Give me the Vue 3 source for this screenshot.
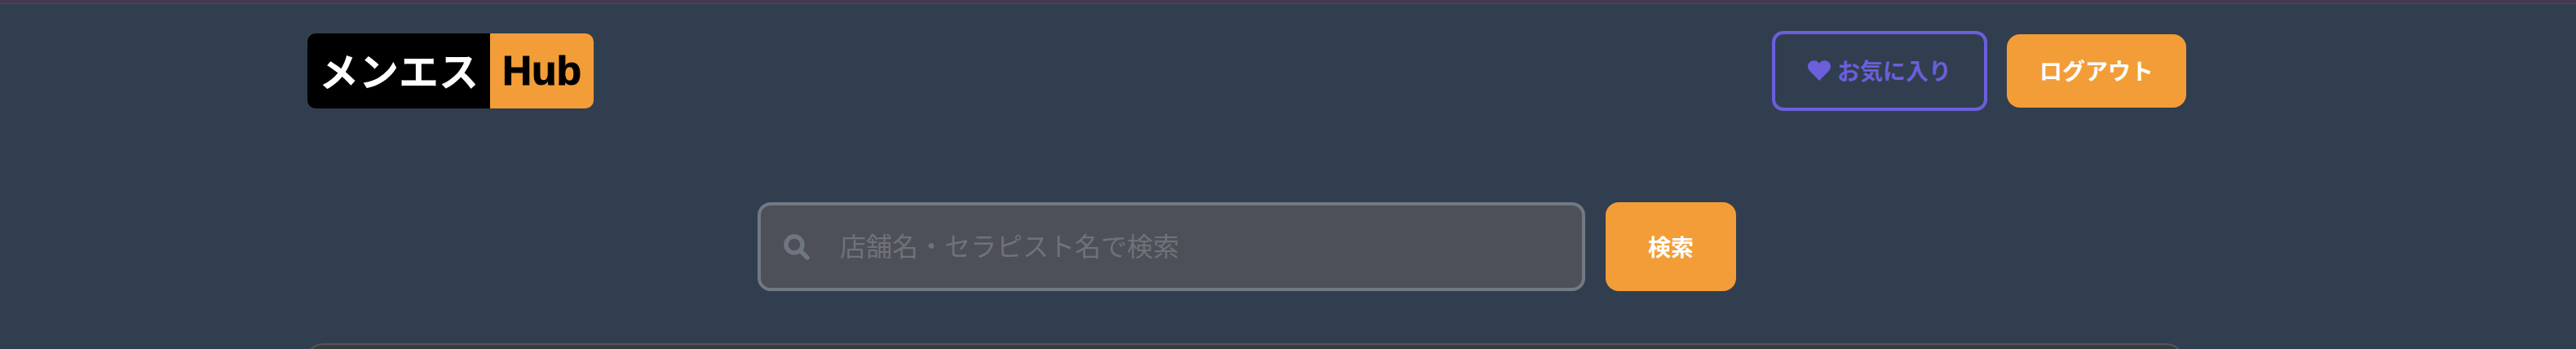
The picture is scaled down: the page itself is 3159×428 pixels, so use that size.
<script setup>
const placeholder = '店舗名・セラピスト名で検索'
</script>

<template>
  <div class="page">
    <div class="topline"></div>
    <header class="header">
      <div class="logo">
        <span class="logo-left">メンエス</span>
        <span class="logo-right">Hub</span>
      </div>
      <div class="actions">
        <button class="fav">
          <svg class="heart" viewBox="0 0 28 25" aria-hidden="true">
            <path d="M14 25 2.800 13.600C-.9 9.800-.9 5 2.300 2.200 5.400-.6 10.200-.4 13 2.600l1 1.100 1-1.100c2.800-3 7.600-3.200 10.700-.4 3.200 2.800 3.200 7.600-.5 11.400Z" />
          </svg>
          お気に入り
        </button>
        <button class="orange logout">ログアウト</button>
      </div>
    </header>
    <form class="search" @submit.prevent>
      <div class="field">
        <svg class="glass" viewBox="0 0 32 32" aria-hidden="true">
          <circle cx="13" cy="13" r="10" />
          <path d="M20.500 20.500l8.500 8.500" />
        </svg>
        <input class="input" type="text" :placeholder="placeholder" />
      </div>
      <button class="orange submit">検索</button>
    </form>
    <section class="card"></section>
  </div>
</template>

<style>
html, body { margin: 0; background: #313e4f; overflow: hidden; }
</style>

<style scoped>
.page {
  width: 3159px;
  height: 428px;
  overflow: hidden;
  font-family: "Noto Sans CJK JP", "Liberation Sans", sans-serif;
}
.topline {
  height: 4px;
  background: #47374f;
  border-bottom: 1px solid #4c4a58;
}
.header {
  display: flex;
  align-items: center;
  justify-content: space-between;
  margin: 33px 478px 0 377px;
  height: 98px;
}
.logo {
  display: flex;
  height: 92px;
  border-radius: 10px;
  overflow: hidden;
  font-weight: 700;
}
.logo-left {
  width: 224px;
  background: #000;
  color: #fff;
  font-size: 49px;
  line-height: 88px;
  text-align: center;
}
.logo-right {
  width: 127px;
  background: #f29d37;
  color: #000;
  font-family: "Liberation Sans", sans-serif;
  font-size: 50px;
  line-height: 92px;
  text-align: center;
  -webkit-text-stroke: 1px #000;
}
.actions {
  display: flex;
  align-items: center;
  gap: 24px;
}
button {
  font-family: inherit;
  font-weight: 700;
  cursor: pointer;
}
.fav {
  display: flex;
  align-items: center;
  justify-content: center;
  gap: 8px;
  box-sizing: border-box;
  width: 264px;
  height: 98px;
  padding: 0 0 2px;
  border: 4px solid #6b5fdc;
  border-radius: 14px;
  background: transparent;
  color: #6b5fdc;
  font-size: 28px;
}
.heart {
  width: 28px;
  height: 25px;
  fill: #6b5fdc;
}
.orange {
  border: 0;
  background: #f29d37;
  color: #fff;
  font-size: 28px;
  padding: 0 0 2px;
}
.logout {
  width: 220px;
  height: 90px;
  border-radius: 16px;
}
.search {
  display: flex;
  gap: 25px;
  margin: 112px 0 0 929px;
}
.field {
  display: flex;
  align-items: center;
  box-sizing: border-box;
  width: 1015px;
  height: 109px;
  padding-left: 28px;
  border: 4px solid #717984;
  border-radius: 16px;
  background: #4d5058;
}
.glass {
  flex: none;
  width: 32px;
  height: 32px;
  fill: none;
  stroke: #6f7681;
  stroke-width: 5.500;
  stroke-linecap: round;
}
.input {
  flex: 1;
  min-width: 0;
  margin-left: 37px;
  padding: 0 0 6px;
  border: 0;
  outline: 0;
  background: transparent;
  font-family: inherit;
  font-size: 32px;
  color: #fff;
}
.input::placeholder {
  color: #6f7278;
  opacity: 1;
}
.submit {
  width: 160px;
  height: 109px;
  border-radius: 16px;
}
.card {
  box-sizing: border-box;
  width: 2307px;
  height: 300px;
  margin: 64px 0 0 373px;
  border: 2px solid #545659;
  border-radius: 24px;
  background: #383a3d;
}
</style>
